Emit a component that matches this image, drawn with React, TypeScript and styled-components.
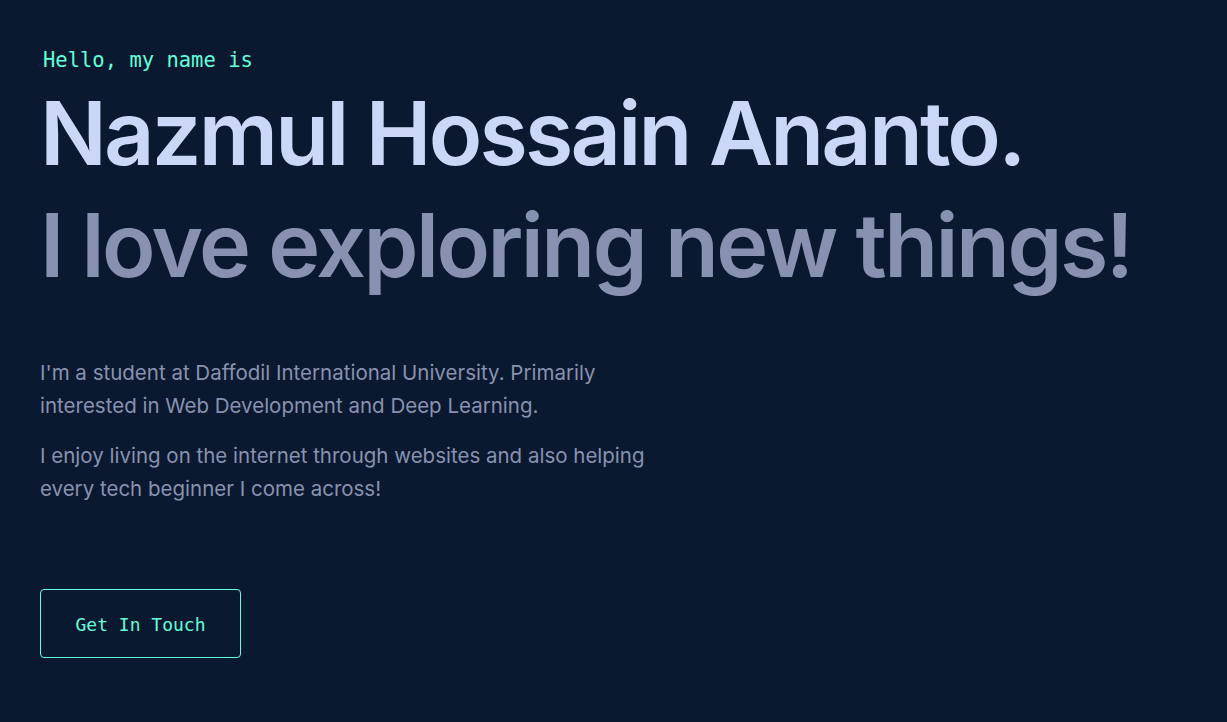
import styled, { createGlobalStyle } from "styled-components";

const GlobalStyle = createGlobalStyle`
  html, body {
    margin: 0;
    padding: 0;
    background-color: #0a192f;
  }
  * {
    box-sizing: border-box;
  }
`;

const paragraphs = [
  "I'm a student at Daffodil International University. Primarily interested in Web Development and Deep Learning.",
  "I enjoy living on the internet through websites and also helping every tech beginner I come across!",
];

const App: React.FC = () => {
  return (
    <>
      <GlobalStyle />
      <Page>
        <Hero>
          <Greeting>Hello, my name is</Greeting>
          <BigHeading>Nazmul Hossain Ananto.</BigHeading>
          <BigHeading $muted>I love exploring new things!</BigHeading>
          <About>
            {paragraphs.map((text) => (
              <Paragraph key={text}>{text}</Paragraph>
            ))}
          </About>
          <ContactButton>Get In Touch</ContactButton>
        </Hero>
      </Page>
    </>
  );
};

const Page = styled.main`
  min-height: 100vh;
  background-color: #0a192f;
  padding: 0 40px;
`;

const Hero = styled.section`
  display: flex;
  flex-direction: column;
  align-items: flex-start;
  padding-top: 47px;
`;

const Greeting = styled.h1`
  margin: 0 0 0 3px;
  color: #64ffda;
  font-family: "DejaVu Sans Mono", "Liberation Mono", monospace;
  font-size: 20.5px;
  font-weight: 400;
  line-height: 26px;
`;

const BigHeading = styled.h2<{ $muted?: boolean }>`
  margin: ${(props) => (props.$muted ? "12px 0 0" : "10px 0 0")};
  color: ${(props) => (props.$muted ? "#8892b0" : "#ccd6f6")};
  font-family: Inter, "Noto Sans", sans-serif;
  font-size: 88px;
  font-weight: 600;
  letter-spacing: ${(props) => (props.$muted ? "-2.5px" : "-2.8px")};
  line-height: 100px;
  white-space: nowrap;
`;

const About = styled.div`
  margin-top: 61px;
  max-width: 620px;
  display: flex;
  flex-direction: column;
  gap: 17px;
`;

const Paragraph = styled.p`
  margin: 0;
  color: #8892b0;
  font-family: Inter, "Noto Sans", sans-serif;
  font-size: 20.5px;
  line-height: 33px;
`;

const ContactButton = styled.button`
  margin-top: 84px;
  width: 201px;
  height: 69px;
  padding-top: 3px;
  background: transparent;
  border: 1px solid #64ffda;
  border-radius: 4px;
  color: #64ffda;
  font-family: "DejaVu Sans Mono", "Liberation Mono", monospace;
  font-size: 18px;
  cursor: pointer;
`;

export default App;
